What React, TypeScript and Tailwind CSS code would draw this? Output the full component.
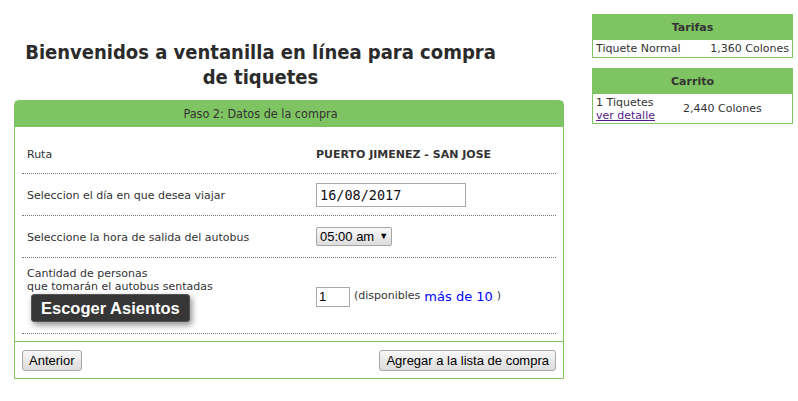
const fila = 'flex items-center border-b border-dotted border-[#777]';

const Boton = ({ children }: { children: React.ReactNode }) => (
  <button
    type="button"
    className="h-[21px] px-[6px] border border-[#a6a6a6] rounded-[3px] bg-gradient-to-b from-[#f8f8f8] to-[#dcdcdc] text-black text-[13px] leading-[19px] font-['Liberation_Sans',Arial,sans-serif]"
  >
    {children}
  </button>
);

const App = () => {
  return (
    <div className="flex min-h-[401px] bg-white text-[#333] text-[11px] font-['DejaVu_Sans',Verdana,sans-serif]">
      <div className="ml-[14px] w-[550px]">
        <h1 className="mt-[40px] mb-[10px] pr-[57px] text-center text-[20px] leading-[25px] font-bold text-[#2b2b2b] font-['DejaVu_Sans_Condensed','DejaVu_Sans',sans-serif] [font-stretch:condensed]">
          Bienvenidos a ventanilla en línea para compra de tiquetes
        </h1>

        <div className="border border-[#7fc462] rounded-t-[5px]">
          <div className="h-[26px] pr-[57px] bg-[#7fc462] flex items-center justify-center text-[12.5px] text-[#333] font-['DejaVu_Sans_Condensed','DejaVu_Sans',sans-serif] [font-stretch:condensed]">
            Paso 2: Datos de la compra
          </div>

          <div className="px-[7px] pt-[5px] pb-[7px]">
            <div className={`${fila} h-[42px] pt-[6px]`}>
              <div className="w-[289px] pl-[5px]">Ruta</div>
              <div className="pl-[5px] font-bold">PUERTO JIMENEZ - SAN JOSE</div>
            </div>

            <div className={`${fila} h-[42px]`}>
              <div className="w-[289px] pl-[5px] pt-[4px]">Seleccion el día en que desea viajar</div>
              <div className="pl-[5px]">
                <input
                  type="text"
                  defaultValue="16/08/2017"
                  className="w-[150px] h-[24px] border border-[#a9a9a9] px-[3px] text-[13.5px] text-[#111] font-['DejaVu_Sans_Mono',monospace] outline-none"
                />
              </div>
            </div>

            <div className={`${fila} h-[42px]`}>
              <div className="w-[289px] pl-[5px] pt-[4px]">Seleccione la hora de salida del autobus</div>
              <div className="pl-[5px]">
                <div className="flex items-center gap-[5px] w-[76px] h-[19px] pl-[3px] border border-[#a6a6a6] rounded-[2px] bg-gradient-to-b from-[#f8f8f8] to-[#dddddd] text-black text-[13px] font-['Liberation_Sans',Arial,sans-serif]">
                  05:00 am
                  <span className="text-[9px]">▼</span>
                </div>
              </div>
            </div>

            <div className={`${fila} h-[76px] pt-[2px]`}>
              <div className="w-[289px] pl-[5px] -mt-[4px] leading-[13px]">
                <div>Cantidad de personas</div>
                <div>que tomarán el autobus sentadas</div>
                <div className="inline-block mt-[1px] ml-[4px] h-[28px] px-[9px] rounded-[3px] border border-[#555] bg-[#363636] text-white text-[16.5px] leading-[26px] font-bold font-['Liberation_Sans',Arial,sans-serif] shadow-[2px_3px_6px_rgba(0,0,0,0.45)]">
                  Escoger Asientos
                </div>
              </div>
              <div className="pl-[5px] flex items-center">
                <input
                  type="text"
                  defaultValue="1"
                  className="w-[34px] h-[20px] border border-[#a9a9a9] px-[2px] text-[13px] text-black font-['Liberation_Sans',Arial,sans-serif] outline-none"
                />
                <span className="ml-[4px]">(disponibles</span>
                <span className="ml-[4px] text-[13px] text-[#0000ff]">más de 10</span>
                <span className="ml-[4px]">)</span>
              </div>
            </div>
          </div>

          <div className="flex justify-between border-t border-[#7fc462] px-[7px] pt-[8px] pb-[7px]">
            <Boton>Anterior</Boton>
            <Boton>Agregar a la lista de compra</Boton>
          </div>
        </div>
      </div>

      <div className="ml-[28px] mt-[14px] w-[201px]">
        <div className="border border-[#7fc462]">
          <div className="h-[25px] pt-[1px] bg-[#7fc462] flex items-center justify-center font-bold">Tarifas</div>
          <div className="flex justify-between items-center h-[17px] px-[3px] pt-[1px]">
            <span>Tiquete Normal</span>
            <span>1,360 Colones</span>
          </div>
        </div>

        <div className="mt-[10px] border border-[#7fc462]">
          <div className="h-[25px] pt-[1px] bg-[#7fc462] flex items-center justify-center font-bold">Carrito</div>
          <div className="flex items-center h-[29px] px-[3px] leading-[13px]">
            <div className="w-[87px]">
              <div>1 Tiquetes</div>
              <a href="#" className="text-[#551a8b] underline">ver detalle</a>
            </div>
            <div>2,440 Colones</div>
          </div>
        </div>
      </div>
    </div>
  );
};

export default App;
